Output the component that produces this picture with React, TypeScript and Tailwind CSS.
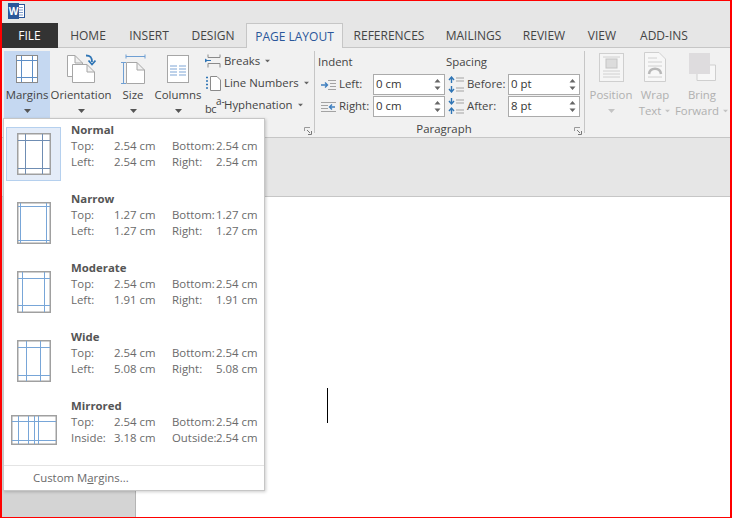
import type { ReactNode } from 'react'

const tabs = [
  { label: 'HOME', w: 'w-[60px]' },
  { label: 'INSERT', w: 'w-[62px]' },
  { label: 'DESIGN', w: 'w-[66px]' },
]
const tabsAfter = [
  { label: 'REFERENCES', w: 'w-[92px]' },
  { label: 'MAILINGS', w: 'w-[77px]' },
  { label: 'REVIEW', w: 'w-[64px]' },
  { label: 'VIEW', w: 'w-[52px]' },
  { label: 'ADD-INS', w: 'w-[72px]' },
]

const margins = [
  { name: 'Normal', top: '2.54 cm', bottom: '2.54 cm', side: '2.54 cm', side2: '2.54 cm', v: [8.5, 25.5], h: [7.5, 35.5], selected: true },
  { name: 'Narrow', top: '1.27 cm', bottom: '1.27 cm', side: '1.27 cm', side2: '1.27 cm', v: [3.5, 29.5], h: [4.5, 38.5] },
  { name: 'Moderate', top: '2.54 cm', bottom: '2.54 cm', side: '1.91 cm', side2: '1.91 cm', v: [5.5, 27.5], h: [7.5, 34.5] },
  { name: 'Wide', top: '2.54 cm', bottom: '2.54 cm', side: '5.08 cm', side2: '5.08 cm', v: [9.5, 23.5], h: [7.5, 35.5] },
  { name: 'Mirrored', top: '2.54 cm', bottom: '2.54 cm', side: '3.18 cm', side2: '2.54 cm', labels: ['Inside:', 'Outside:'], v: [7.5, 17.5, 23.5, 27.5], h: [6.5, 25.5], wide: true },
]

function Caret({ className = '' }: { className?: string }) {
  return (
    <svg width="7" height="4" viewBox="0 0 7 4" className={className}>
      <path d="M0 0h7L3.5 4z" fill="currentColor" />
    </svg>
  )
}

function Launcher() {
  return (
    <svg width="8" height="8" viewBox="0 0 8 8" fill="none" className="absolute right-[2px] bottom-[-2px]">
      <path d="M.5 4V.5H6" stroke="#9a9a9a" />
      <path d="M3 3l3 3M7.5 4v3.5H4" stroke="#7a7a7a" />
    </svg>
  )
}

function MarginIcon({ v, h, wide, selected }: { v: number[]; h: number[]; wide?: boolean; selected?: boolean }) {
  const w = wide ? 46 : 34
  const ht = wide ? 30 : 42
  const line = selected ? '#6f8db3' : '#78a6d8'
  return (
    <svg width={w} height={ht} viewBox={`0 0 ${w} ${ht}`} fill="none">
      <rect x="0.75" y="0.75" width={w - 1.5} height={ht - 1.5} fill="#fff" stroke="#a0a0a0" strokeWidth="1.5" />
      {v.map((x) => (
        <path key={x} d={`M${x} 1V${ht - 1}`} stroke={line} />
      ))}
      {h.map((y) => (
        <path key={y} d={`M1 ${y}H${w - 1}`} stroke={line} />
      ))}
    </svg>
  )
}

function BigButton({ icon, label, w, active }: { icon: ReactNode; label: string; w: string; active?: boolean }) {
  return (
    <div className={`${w} h-[67px] flex flex-col items-center ${active ? 'bg-[#c5d8f1]' : ''}`}>
      <div className="h-[36px] pt-[3px] flex justify-center">{icon}</div>
      <span className="leading-[16px] whitespace-nowrap">{label}</span>
      <Caret className="mt-[6px] text-[#555]" />
    </div>
  )
}

function SmallButton({ icon, label }: { icon: ReactNode; label: string }) {
  return (
    <div className="h-[22px] flex items-center">
      <div className="w-[19px] flex justify-start">{icon}</div>
      <span className="whitespace-nowrap">{label}</span>
      <Caret className="ml-[4px] scale-75 text-[#666]" />
    </div>
  )
}

function SpinInput({ value }: { value: string }) {
  return (
    <div className="w-[72px] h-[21px] border border-[#ababab] bg-white flex items-center justify-between pl-[2px] pr-[3px] text-[#333]">
      <span className="pb-px">{value}</span>
      <svg width="7" height="13" viewBox="0 0 7 13" fill="#666">
        <path d="M3.5 1L6.5 4.5H.5zM3.5 12L.5 8.5H6.5z" />
      </svg>
    </div>
  )
}

function IndentIcon({ right }: { right?: boolean }) {
  return (
    <svg width="15" height="12" viewBox="0 0 15 12" fill="none">
      <path d={right ? 'M0 1.5H15M0 4.5H7M0 7.5H7M0 10.5H15' : 'M7 1.5H15M9 4.5H15M9 7.5H15M7 10.5H15'} stroke="#a3a3a3" />
      <path d={right ? 'M14 6H9M11 3.5L8.5 6L11 8.5' : 'M0 6H6M4 3.5L6.5 6L4 8.5'} stroke="#3f7fbf" strokeWidth="1.4" />
    </svg>
  )
}

function SpacingIcon({ after }: { after?: boolean }) {
  return (
    <svg width="16" height="17" viewBox="0 0 16 17" fill="none">
      <path d="M8 2H16M8 5H16M8 12H16M8 15H16" stroke="#a3a3a3" />
      {after ? (
        <path d="M3.5 0V5M1 3l2.5 3L6 3M3.5 16V10M1 13l2.5-3L6 13" stroke="#2f75b5" strokeWidth="1.4" />
      ) : (
        <path d="M3.5 7V1M1 4l2.5-3L6 4M3.5 10V16M1 13l2.5 3L6 13" stroke="#2f75b5" strokeWidth="1.4" />
      )}
    </svg>
  )
}

function PageGlyph({ x, y, w, h }: { x: number; y: number; w: number; h: number }) {
  return (
    <path
      d={`M${x + 0.5} ${y + 0.5}H${x + w - 8}L${x + w - 0.5} ${y + 8}V${y + h - 0.5}H${x + 0.5}ZM${x + w - 8} ${y + 0.5}V${y + 8}H${x + w - 0.5}`}
      fill="#fff"
      stroke="#a6a6a6"
    />
  )
}

export default function App() {
  return (
    <div className="relative w-[732px] h-[518px] overflow-hidden bg-[#e6e6e6] flex flex-col text-[11.4px] text-[#444] font-['Open_Sans',sans-serif]">
      <div className="h-[23px] pl-[8px] pt-[3px] shrink-0">
        <svg width="17" height="16" viewBox="0 0 17 16">
          <rect x="5" y="1.5" width="11.5" height="13" fill="#fff" stroke="#2b579a" />
          <path d="M10 4.5h5M10 7h5M10 9.5h5M10 12h5" stroke="#7e9ccb" />
          <rect x="0" y="0" width="11" height="16" fill="#2b579a" />
          <text x="5.5" y="12" textAnchor="middle" fontSize="10" fontWeight="700" fill="#fff" fontFamily="Open Sans">W</text>
        </svg>
      </div>

      <div className="h-[25px] shrink-0 flex pl-px border-b border-[#c6c6c6] text-[12px]">
        <div className="w-[57px] h-[25px] pt-px bg-[#333] text-white flex items-center justify-center">FILE</div>
        {tabs.map((t) => (
          <div key={t.label} className={`${t.w} pt-px flex items-center justify-center`}>{t.label}</div>
        ))}
        <div className="w-[97px] h-[25px] pt-px bg-[#f1f1f1] border border-b-0 border-[#c6c6c6] text-[#2b579a] flex items-center justify-center">PAGE LAYOUT</div>
        {tabsAfter.map((t) => (
          <div key={t.label} className={`${t.w} pt-px flex items-center justify-center`}>{t.label}</div>
        ))}
      </div>

      <div className="h-[90px] shrink-0 bg-[#f1f1f1] border-b border-[#c6c6c6] flex pt-[3px]">
        <div className="relative w-[315px] h-[82px] border-r border-[#c6c6c6] pl-[4px] flex">
          <BigButton
            w="w-[46px]"
            active
            label="Margins"
            icon={
              <svg width="22" height="28" viewBox="0 0 22 28" fill="none" className="mt-px">
                <rect x="0.5" y="0.5" width="21" height="27" fill="#fff" stroke="#8a8a8a" />
                <path d="M5.5 1V27M16.5 1V27M1 5.5H21M1 22.5H21" stroke="#5d8ec6" />
              </svg>
            }
          />
          <BigButton
            w="w-[62px]"
            label="Orientation"
            icon={
              <svg width="30" height="30" viewBox="0 0 30 30" fill="none">
                <PageGlyph x={1} y={1} w={16} h={22} />
                <PageGlyph x={6} y={10} w={23} h={19} />
                <path d="M20 1.5C25 1.5 26 4 26 8" stroke="#2f75b5" strokeWidth="1.8" />
                <path d="M22.5 6.5L26 10.5L29.5 6.5" stroke="#2f75b5" strokeWidth="1.8" />
              </svg>
            }
          />
          <BigButton
            w="w-[42px]"
            label="Size"
            icon={
              <svg width="26" height="30" viewBox="0 0 26 30" fill="none">
                <path d="M6 2.5H25M6 .5V4.5M25 .5V4.5M1 8.5H6M1 29.5H6M3.5 8.5V29.5" stroke="#6f9fd3" />
                <PageGlyph x={6} y={8} w={19} h={22} />
              </svg>
            }
          />
          <BigButton
            w="w-[48px]"
            label="Columns"
            icon={
              <svg width="22" height="28" viewBox="0 0 22 28" fill="none" className="mt-px">
                <rect x="0.5" y="0.5" width="21" height="27" fill="#fff" stroke="#a6a6a6" />
                <path d="M3 11H10M3 14H10M3 17H10M3 20H10M12 11H19M12 14H19M12 17H19M12 20H19" stroke="#7ea6d6" strokeWidth="1.2" />
              </svg>
            }
          />
          <div className="ml-[3px] -mt-px flex flex-col">
            <SmallButton
              label="Breaks"
              icon={
                <svg width="16" height="14" viewBox="0 0 16 14" fill="none">
                  <path d="M3 .5V3.5H15V.5M3 13.5V9.5H15V13.5" stroke="#8a8a8a" />
                  <path d="M0 6.5H6" stroke="#2f75b5" />
                  <path d="M0 4.5V8.5L3 6.5Z" fill="#2f75b5" />
                </svg>
              }
            />
            <SmallButton
              label="Line Numbers"
              icon={
                <svg width="16" height="15" viewBox="0 0 16 15" fill="none">
                  <path d="M1 1.5H3M1 5H3M1 8.5H3M1 12H3" stroke="#2f75b5" strokeWidth="1.4" />
                  <path d="M5.5 .5H12L15.5 4V14.5H5.5Z" fill="#fff" stroke="#8a8a8a" />
                </svg>
              }
            />
            <SmallButton
              label="Hyphenation"
              icon={
                <span className="relative block w-[18px] h-[16px] leading-none text-[#444]">
                  <span className="absolute left-0 top-[6px] text-[11px] tracking-[-0.5px]">bc</span>
                  <span className="absolute left-[11px] top-[-1px] text-[10px]">a-</span>
                </span>
              }
            />
          </div>
          <Launcher />
        </div>

        <div className="relative w-[270px] h-[82px] border-r border-[#c6c6c6] pl-[3px] flex flex-col">
          <div className="flex">
            <div className="w-[128px]">
              <div className="h-[23px] pt-[3px] leading-[16px]">Indent</div>
              <div className="flex flex-col gap-[1px]">
                <div className="grid grid-cols-[21px_34px_72px] items-center">
                  <div className="pl-[3px] flex"><IndentIcon /></div>
                  <span className="pb-px">Left:</span>
                  <SpinInput value="0 cm" />
                </div>
                <div className="grid grid-cols-[21px_34px_72px] items-center">
                  <div className="pl-[3px] flex"><IndentIcon right /></div>
                  <span className="pb-px">Right:</span>
                  <SpinInput value="0 cm" />
                </div>
              </div>
            </div>
            <div>
              <div className="h-[23px] pt-[3px] leading-[16px]">Spacing</div>
              <div className="flex flex-col gap-[1px]">
                <div className="grid grid-cols-[21px_41px_72px] items-center">
                  <div className="pl-[2px] flex"><SpacingIcon /></div>
                  <span className="pb-px">Before:</span>
                  <SpinInput value="0 pt" />
                </div>
                <div className="grid grid-cols-[21px_41px_72px] items-center">
                  <div className="pl-[2px] flex"><SpacingIcon after /></div>
                  <span className="pb-px">After:</span>
                  <SpinInput value="8 pt" />
                </div>
              </div>
            </div>
          </div>
          <div className="mt-[4px] h-[16px] leading-[16px] text-center pr-[14px]">Paragraph</div>
          <Launcher />
        </div>

        <div className="flex pl-px text-[#b0b0b0]">
          <div className="w-[50px] flex flex-col items-center">
            <div className="h-[36px] pt-[2px]">
              <svg width="25" height="29" viewBox="0 0 25 29" fill="none">
                <rect x="0.5" y="0.5" width="24" height="28" fill="#f5f5f5" stroke="#cfcfcf" />
                <rect x="7" y="6" width="11" height="9" fill="#dcdcdc" stroke="#c4c4c4" />
                <path d="M4 4H21M4 18H21M4 21H21M4 24H21" stroke="#d0d0d0" />
              </svg>
            </div>
            <span className="leading-[16px]">Position</span>
            <Caret className="mt-[6px] text-[#c4c4c4]" />
          </div>
          <div className="w-[38px] flex flex-col items-center">
            <div className="h-[36px] pt-[1px]">
              <svg width="22" height="30" viewBox="0 0 22 30" fill="none">
                <path d="M.5 .5H15L21.5 7V29.5H.5Z" fill="#f7f7f7" stroke="#cfcfcf" />
                <path d="M4 6H13M4 10H18M4 14H18M4 25H18" stroke="#d0d0d0" />
                <path d="M5 22C6 15 16 15 17 22" stroke="#b8b8b8" strokeWidth="2.5" />
              </svg>
            </div>
            <span className="leading-[16px]">Wrap</span>
            <span className="leading-[16px] whitespace-nowrap flex items-center">Text<Caret className="ml-[3px] scale-75 text-[#c4c4c4]" /></span>
          </div>
          <div className="w-[56px] flex flex-col items-center">
            <div className="h-[36px] pt-[2px]">
              <svg width="27" height="28" viewBox="0 0 27 28" fill="none">
                <path d="M8 12H26.5V27.5H8Z" fill="#f7f7f7" stroke="#cfcfcf" />
                <rect x="0" y="0" width="21" height="21" fill="#dedcde" />
              </svg>
            </div>
            <span className="leading-[16px]">Bring</span>
            <span className="leading-[16px] whitespace-nowrap flex items-center">Forward<Caret className="ml-[3px] scale-75 text-[#c4c4c4]" /></span>
          </div>
        </div>
      </div>

      <div className="h-[59px] shrink-0 bg-[#e6e6e6] border-b border-[#c6c6c6]" />

      <div className="flex-1 flex">
        <div className="w-[136px] bg-[#d4d4d4] border-r border-[#b4b4b4]" />
        <div className="flex-1 bg-white pl-[191px] pt-[191px]">
          <div className="w-px h-[35px] bg-black" />
        </div>
      </div>

      {/* dropdown over the ribbon */}
      <div className="absolute left-[3px] top-[118px] w-[262px] h-[373px] bg-white border border-[#c6c6c6] shadow-[1px_1px_3px_rgba(0,0,0,0.2)] flex flex-col pt-px text-[#6a6a6a]">
        {margins.map((m) => (
          <div key={m.name} className="h-[69px] flex shrink-0">
            <div className={`ml-[2px] mt-[7px] w-[55px] h-[54px] flex items-center justify-center border ${m.selected ? 'bg-[#e4ecf8] border-[#b5d0ee]' : 'border-transparent'}`}>
              <MarginIcon v={m.v} h={m.h} wide={m.wide} selected={m.selected} />
            </div>
            <div className="ml-[10px] pt-[2px] leading-[16px]">
              <div className="font-bold text-[#555]">{m.name}</div>
              <div className="grid grid-cols-[43px_58px_44px_auto] whitespace-nowrap">
                <span>Top:</span>
                <span>{m.top}</span>
                <span>Bottom:</span>
                <span>{m.bottom}</span>
                <span>{m.labels ? m.labels[0] : 'Left:'}</span>
                <span>{m.side}</span>
                <span>{m.labels ? m.labels[1] : 'Right:'}</span>
                <span>{m.side2}</span>
              </div>
            </div>
          </div>
        ))}
        <div className="flex-1 border-t border-[#e4e4e4] pl-[29px] flex items-center">
          <span>Custom M<span className="underline">a</span>rgins...</span>
        </div>
      </div>

      {/* red outline around the capture */}
      <div className="absolute inset-0 pointer-events-none border-y border-x-2 border-[#ff0000]" />
    </div>
  )
}
